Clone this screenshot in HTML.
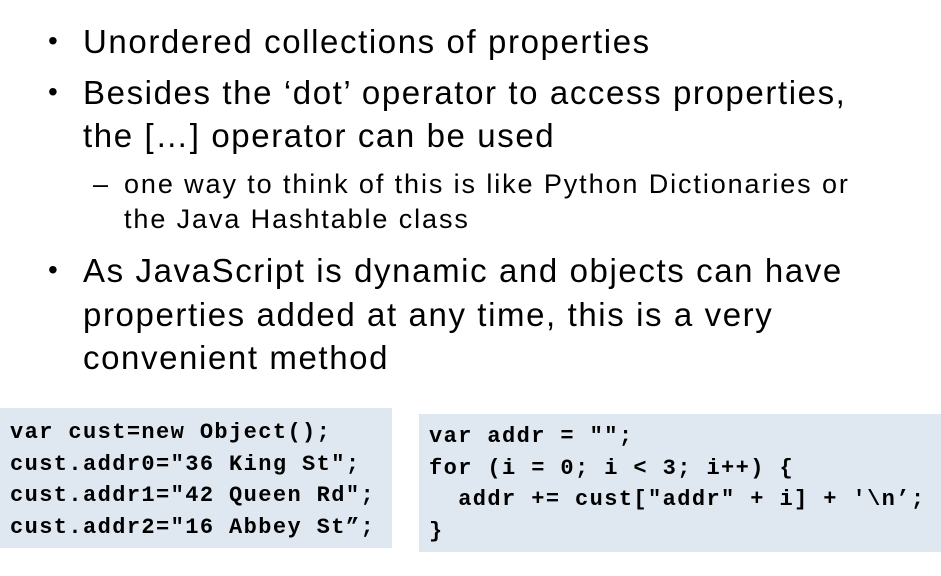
<!DOCTYPE html>
<html><head><meta charset="utf-8"><style>
body{margin:0;width:941px;height:576px;background:#fff;position:relative;overflow:hidden;font-family:"Liberation Sans",sans-serif;color:#000}
.l{position:absolute;white-space:nowrap;font-size:33px;line-height:1;letter-spacing:1.6px}
.s{position:absolute;white-space:nowrap;font-size:27px;line-height:1;letter-spacing:1.9px}
.b{position:absolute;font-size:28px}
.box{position:absolute;background:#dfe7f1}
.code{position:absolute;font-family:"Liberation Mono",monospace;font-weight:bold;font-size:22px;line-height:31.5px;white-space:pre;letter-spacing:1.4px}
</style></head><body>
<div class="b" style="left:48px;top:25px">•</div>
<div class="l" style="left:83px;top:25px">Unordered collections of properties</div>
<div class="b" style="left:48px;top:76px">•</div>
<div class="l" style="left:83px;top:76px">Besides the ‘dot’ operator to access properties,</div>
<div class="l" style="left:83px;top:119px">the […] operator can be used</div>
<div class="s" style="left:93px;top:171px">–</div>
<div class="s" style="left:124px;top:171px">one way to think of this is like Python Dictionaries or</div>
<div class="s" style="left:124px;top:206px">the Java Hashtable class</div>
<div class="b" style="left:48px;top:254px">•</div>
<div class="l" style="left:83px;top:254px">As JavaScript is dynamic and objects can have</div>
<div class="l" style="left:83px;top:298px">properties added at any time, this is a very</div>
<div class="l" style="left:83px;top:341px">convenient method</div>
<div class="box" style="left:0;top:408px;width:392px;height:140px"></div>
<div class="code" style="left:10px;top:417px">var cust=new Object();
cust.addr0="36 King St";
cust.addr1="42 Queen Rd";
cust.addr2="16 Abbey St”;</div>
<div class="box" style="left:419px;top:414px;width:522px;height:138px"></div>
<div class="code" style="left:429px;top:421px">var addr = "";
for (i = 0; i &lt; 3; i++) {
  addr += cust["addr" + i] + '\n’;
}</div>
</body></html>
